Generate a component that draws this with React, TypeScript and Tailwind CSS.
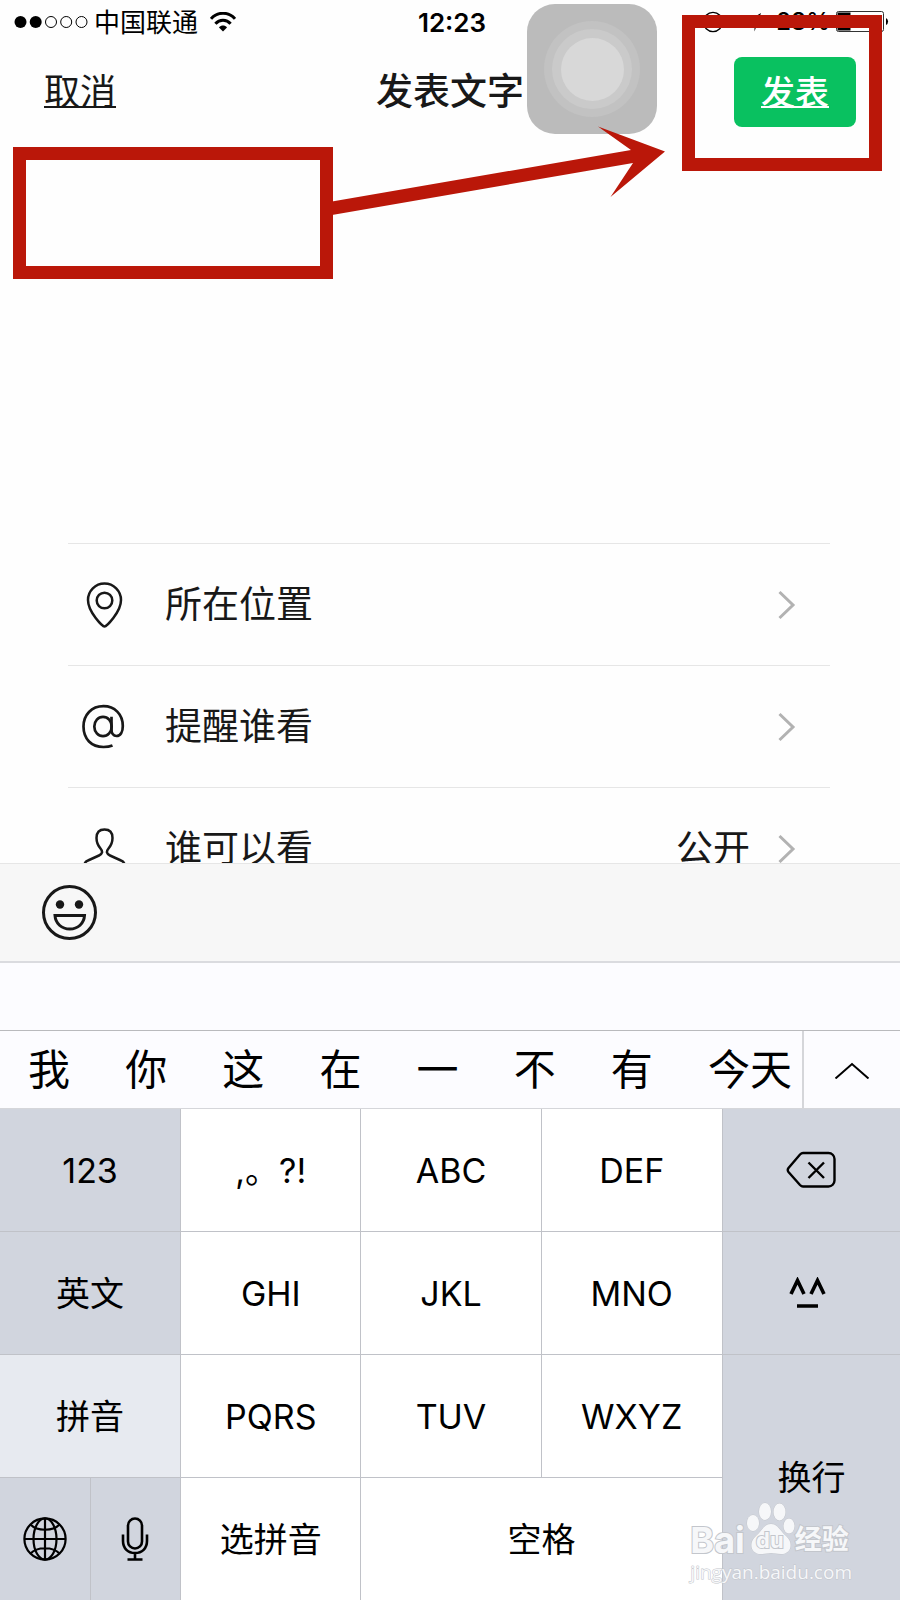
import { useState } from 'react'
import type { ReactNode } from 'react'

const candidates = ['我', '你', '这', '在', '一', '不', '有', '今天']

function Wifi() {
  return (
    <svg viewBox="0 0 26 20" className="h-5 w-[26px]" fill="none" stroke="#000" strokeWidth="3">
      <path d="M1 6.8C7.5-.6 18.5-.6 25 6.8" />
      <path d="M5.4 11.8C9.6 7 16.4 7 20.6 11.8" />
      <path d="M13 19.5L9 15.4C11.2 13 14.8 13 17 15.4Z" fill="#000" stroke="none" />
    </svg>
  )
}

function SignalDots() {
  return (
    <svg viewBox="0 0 76 14" className="h-3.5 w-[76px]" fill="none" stroke="#000">
      <circle cx="6.5" cy="7" r="6" fill="#000" stroke="none" />
      <circle cx="21.7" cy="7" r="6" fill="#000" stroke="none" />
      <circle cx="37" cy="7" r="5.5" />
      <circle cx="52.2" cy="7" r="5.5" />
      <circle cx="67.5" cy="7" r="5.5" />
    </svg>
  )
}

function StatusBar() {
  return (
    <div className="flex h-11 items-center justify-between pr-2.5 pl-3.5 text-black">
      <div className="flex flex-1 items-center">
        <SignalDots />
        <span className="ml-1 text-[26px]">中国联通</span>
        <span className="ml-3"><Wifi /></span>
      </div>
      <span className="text-[26px] font-semibold">12:23</span>
      <div className="flex flex-1 items-center justify-end">
        <svg viewBox="0 0 22 22" className="h-[22px] w-[22px]" fill="none" stroke="#000">
          <circle cx="11" cy="11" r="9.6" strokeWidth="1.4" />
          <rect x="7.5" y="10" width="7" height="5" fill="#000" stroke="none" />
          <path d="M8.8 10V8.500a2.200 2.200 0 0 1 4.400 0V10" />
        </svg>
        <svg viewBox="0 0 20 20" className="ml-5 h-5 w-5">
          <path d="M17 1L1 10.500H10.500V19.500Z" />
        </svg>
        <span className="ml-3 text-2xl font-medium">28%</span>
        <svg viewBox="0 0 54 22" className="ml-1.5 h-[22px] w-[54px]" fill="none">
          <rect x=".5" y=".5" width="47" height="20" rx="2" stroke="#333" />
          <rect x="1.5" y="1.5" width="13" height="18" fill="#000" />
          <path d="M50 7a4 4 0 0 1 0 7Z" fill="#000" />
        </svg>
      </div>
    </div>
  )
}

function PinIcon() {
  return (
    <svg viewBox="0 0 48 48" className="h-12 w-12" fill="none" stroke="#181818" strokeWidth="2.500">
      <path d="M24.500 45.500C22.500 45.500 8 31 8 19A16.500 16.500 0 0 1 41 19C41 31 26.500 45.500 24.500 45.500Z" />
      <circle cx="24.500" cy="19.500" r="7.800" />
    </svg>
  )
}

function AtIcon() {
  return (
    <svg viewBox="0 0 48 48" className="h-12 w-12" fill="none" stroke="#181818" strokeWidth="2.700">
      <ellipse cx="23" cy="23.500" rx="8.700" ry="9.700" />
      <path d="M31.500 13.800V26.500C31.500 30.500 33.500 33 36.500 33C40.500 33 42.800 29 42.800 23C42.800 11 34.500 3.200 23.500 3.200C11.500 3.200 3.500 12 3.500 23.500C3.500 36 11.500 44 23.500 44C27 44 30 43.500 32.500 42.500" />
    </svg>
  )
}

function PersonIcon() {
  return (
    <svg viewBox="0 0 48 48" className="h-12 w-12" fill="none" stroke="#181818" strokeWidth="2.500">
      <path d="M4.500 44V40C4.500 38 5.500 36.500 8 35.500L19 30.500C22.500 29 23 26.500 20.500 23.500C17.500 20 16.500 17 16.500 13C16.500 7.500 19.500 4.500 24.500 4.500C29.500 4.500 32.500 7.500 32.500 13C32.500 17 31.500 20 28.500 23.500C26 26.500 26.500 29 30 30.500L41 35.500C43.500 36.500 44.500 38 44.500 40V44Z" />
    </svg>
  )
}

function Row({ icon, label, value }: { icon: ReactNode; label: string; value?: string }) {
  return (
    <button className="flex h-[122px] w-full items-center border-t border-[#e6e6e6] pr-[34px] pl-3 text-left text-[37px]">
      {icon}
      <span className="ml-[37px] flex-1">{label}</span>
      {value && <span>{value}</span>}
      <svg viewBox="0 0 18 30" className="ml-7 h-[30px] w-[18px]" fill="none" stroke="#b2b2b2" strokeWidth="3">
        <path d="M1.500 2L15 15L1.500 28" />
      </svg>
    </button>
  )
}

type KeyProps = { children: ReactNode; tone?: string; className?: string; label?: string }

function Key({ children, tone = 'bg-white', className = '', label }: KeyProps) {
  return (
    <button aria-label={label} className={`flex items-center justify-center ${tone} ${className}`}>
      {children}
    </button>
  )
}

const gray = 'bg-[#d1d5de]'

function Keyboard() {
  return (
    <div className="grid auto-rows-[122px] grid-cols-[181fr_180fr_180fr_181fr_178fr] gap-px bg-[#c0c2c8] text-[34px] text-black">
      <Key tone={gray}>123</Key>
      <Key>,。?!</Key>
      <Key>ABC</Key>
      <Key>DEF</Key>
      <Key tone={gray} label="删除">
        <svg viewBox="0 0 50 38" className="h-[38px] w-[50px]" fill="none" stroke="#000" strokeWidth="2.400">
          <path d="M17 2H42.500A6 6 0 0 1 48.500 8V29.500A6 6 0 0 1 42.500 35.500H17Q15.500 35.500 14 34L2.500 21Q1 19 2.500 17L14 3.500Q15.500 2 17 2Z" />
          <path d="M22.500 11.500L38 27M38 11.500L22.500 27" />
        </svg>
      </Key>

      <Key tone={gray}>英文</Key>
      <Key>GHI</Key>
      <Key>JKL</Key>
      <Key>MNO</Key>
      <Key tone={gray} label="表情">
        <svg viewBox="0 0 46 32" className="h-8 w-[46px]" fill="none" stroke="#000" strokeWidth="3.600">
          <path d="M3 17L9.500 3.500L16 17M23 17L29.500 3.500L36 17M9 29H30" />
        </svg>
      </Key>

      <Key tone="bg-[#e7eaf0]">拼音</Key>
      <Key>PQRS</Key>
      <Key>TUV</Key>
      <Key>WXYZ</Key>
      <Key tone={gray} className="row-span-2">换行</Key>

      <div className="grid grid-cols-2 gap-px">
        <Key tone={gray} label="切换键盘">
          <svg viewBox="0 0 44 44" className="h-11 w-11" fill="none" stroke="#000" strokeWidth="2.200">
            <circle cx="22" cy="22" r="20.600" />
            <ellipse cx="22" cy="22" rx="11.500" ry="20.600" />
            <path d="M22 1.400V42.600M1.400 22H42.600M7.500 7.500C14 14.500 30 14.500 36.500 7.500M7.500 36.500C14 29.500 30 29.500 36.500 36.500" />
          </svg>
        </Key>
        <Key tone={gray} label="语音输入">
          <svg viewBox="0 0 28 44" className="h-11 w-7" fill="none" stroke="#000" strokeWidth="2.600">
            <rect x="7" y="1.500" width="14" height="30" rx="7" />
            <path d="M2 17.500V24C2 31.500 7 36 14 36S26 31.500 26 24V17.500M14 36V42.500M6.500 42.500H21.500" />
          </svg>
        </Key>
      </div>
      <Key>选拼音</Key>
      <Key className="col-span-2">空格</Key>
    </div>
  )
}

function Watermark() {
  return (
    <div className="pointer-events-none absolute right-12 bottom-4 flex flex-col text-[#f6f7f9]">
      <div className="flex items-end font-bold [paint-order:stroke] [-webkit-text-stroke:2px_#c3c6cc]">
        <span className="text-[36px] leading-10">Bai</span>
        <div className="relative mb-1">
          <svg viewBox="0 0 50 54" className="h-[54px] w-[50px]" fill="#f6f7f9" stroke="#c3c6cc" strokeWidth="1">
            <ellipse cx="8" cy="21" rx="6" ry="8" />
            <ellipse cx="20" cy="9.500" rx="6" ry="8.500" />
            <ellipse cx="34.500" cy="10" rx="6" ry="8.500" />
            <ellipse cx="44" cy="24" rx="5.500" ry="7.500" />
            <path d="M26 22C19 22 17 29 11 34C3 41 6 52 16 52C20 52 22 51 26 51S32 52 36 52C46 52 49 41 41 34C35 29 33 22 26 22Z" />
          </svg>
          <span className="absolute inset-x-0 bottom-1 text-center text-[22px] leading-6">du</span>
        </div>
        <span className="text-[27px] leading-10">经验</span>
      </div>
      <span className="font-['Open_Sans'] text-[19px] leading-6 [paint-order:stroke] [-webkit-text-stroke:1px_#c3c6cc]">
        jingyan.baidu.com
      </span>
    </div>
  )
}

export default function App() {
  const [text, setText] = useState('')

  return (
    <div className="relative flex h-screen flex-col overflow-hidden bg-[#fefefe] font-[Inter,'Noto_Sans_CJK_SC',sans-serif] text-[#181818]">
      <StatusBar />

      <header className="flex h-24 items-center justify-between px-11">
        <div className="flex-1">
          <button className="text-4xl underline decoration-2 underline-offset-1">取消</button>
        </div>
        <h1 className="text-[37px] font-medium">发表文字</h1>
        <div className="flex flex-1 justify-end">
          <button className="h-[70px] w-[122px] rounded-lg bg-[#09c160] text-[34px] font-medium text-white underline decoration-2 underline-offset-1">
            发表
          </button>
        </div>
      </header>

      <main className="min-h-0 flex-1 overflow-hidden">
        <textarea
          aria-label="正文"
          value={text}
          onChange={e => setText(e.target.value)}
          className="block h-[403px] w-full resize-none bg-transparent px-11 py-6 text-4xl outline-none"
        />
        <div className="mr-[70px] ml-[68px]">
          <Row icon={<PinIcon />} label="所在位置" />
          <Row icon={<AtIcon />} label="提醒谁看" />
          <Row icon={<PersonIcon />} label="谁可以看" value="公开" />
        </div>
      </main>

      <div className="shrink-0">
        <div className="flex h-[100px] items-center border-t border-b-2 border-t-[#e6e6e6] border-b-[#dadbdf] bg-[#f7f7f7] px-[42px]">
          <button aria-label="表情">
            <svg viewBox="0 0 56 56" className="h-14 w-14" fill="none" stroke="#181818" strokeWidth="3">
              <circle cx="27.500" cy="27.500" r="26" />
              <circle cx="18" cy="19.500" r="4.200" fill="#181818" stroke="none" />
              <circle cx="37" cy="19.500" r="4.200" fill="#181818" stroke="none" />
              <path d="M13 30.500H42.500C42 38.500 36 44 27.800 44S13.500 38.500 13 30.500Z" />
            </svg>
          </button>
        </div>
        <div className="h-[68px] border-b border-[#b9babd] bg-[#fcfcff]" />
        <div className="flex h-[78px] border-b border-[#d5d6da] bg-[#fcfcff] text-black">
          <div className="flex flex-1 items-center justify-between pr-2.5 pl-7 text-[42px]">
            {candidates.map(c => <button key={c}>{c}</button>)}
          </div>
          <button aria-label="更多候选" className="flex w-[98px] items-center justify-center border-l-2 border-[#d5d6da]">
            <svg viewBox="0 0 36 18" className="h-[18px] w-9" fill="none" stroke="#000" strokeWidth="2">
              <path d="M1.500 17.500L18 3L34.500 17.500" />
            </svg>
          </button>
        </div>
        <Keyboard />
      </div>

      {/* floating home button */}
      <button
        aria-label="辅助触控"
        className="absolute top-1 right-[243px] flex h-[130px] w-[130px] items-center justify-center rounded-[28px] bg-[#bbbbbb]"
      >
        <span className="flex h-24 w-24 items-center justify-center rounded-full bg-[#c2c2c2]">
          <span className="flex h-20 w-20 items-center justify-center rounded-full bg-[#cacaca]">
            <span className="h-[63px] w-[63px] rounded-full bg-[#d8d8d8]" />
          </span>
        </span>
      </button>

      {/* red callouts */}
      <div className="pointer-events-none absolute top-[147px] left-[13px] h-[132px] w-80 border-[13px] border-[#ba1709]" />
      <div className="pointer-events-none absolute top-[15px] right-[18px] h-[156px] w-[200px] border-[13px] border-[#ba1709]" />
      <svg viewBox="0 0 334 94" className="pointer-events-none absolute top-[122px] left-[332px] h-[94px] w-[334px]" fill="#ba1709">
        <path d="M0 79.500L299 28L266 4.500L333 29.500L278.500 75L301 41L0 93Z" />
      </svg>

      <Watermark />
    </div>
  )
}
